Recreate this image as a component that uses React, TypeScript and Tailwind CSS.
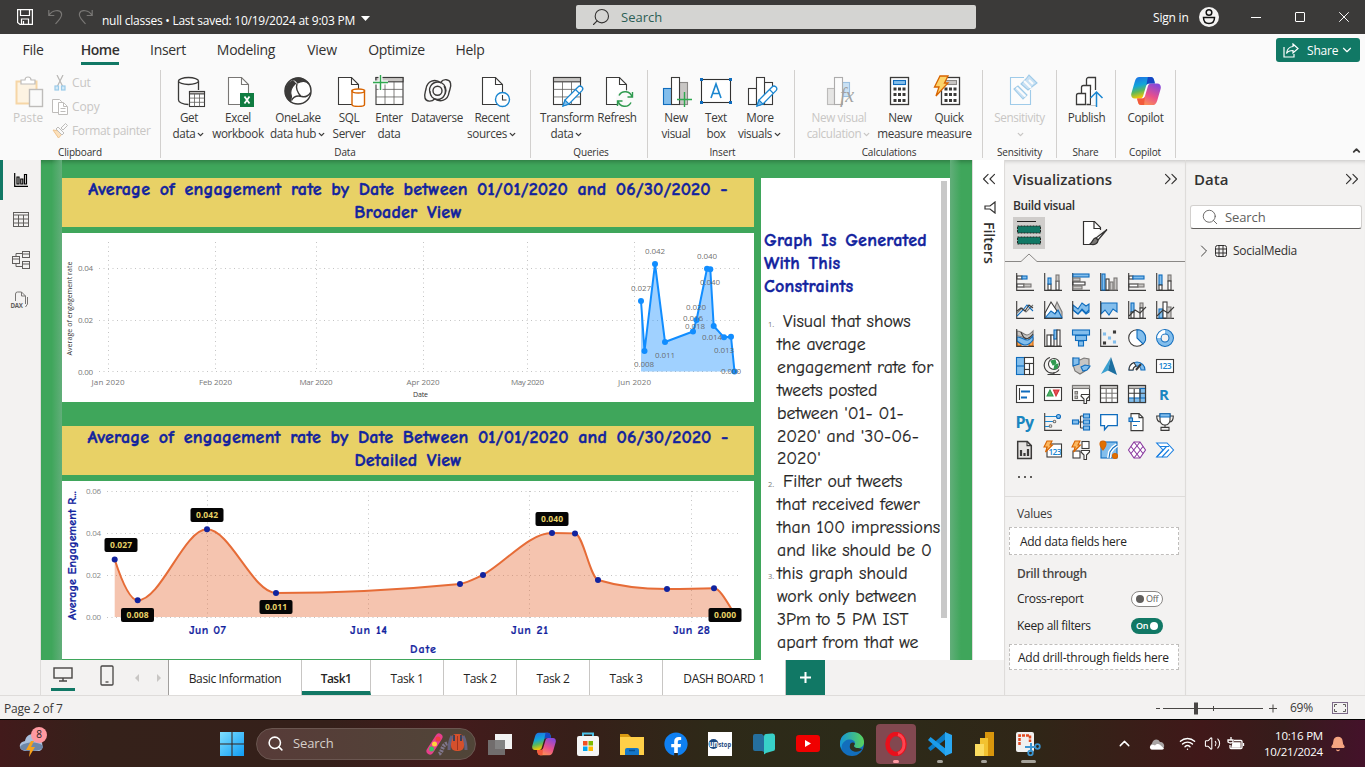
import React from "react";
import {
  ChevronDown, ChevronUp, ChevronsLeft, ChevronsRight, ChevronRight, Search, X, Wifi, Volume2, Bell,
} from "lucide-react";
import { FaFacebook } from "react-icons/fa";

const DK = "#3b3a39";
const BL = "#0f6cbd";
const LB = "#83beec";
const GR = "#c8c6c4";

type Kids = { children?: React.ReactNode };

/* ---------- ribbon drawings, 32 x 34 ---------- */
const R = ({ children, dim }: Kids & { dim?: boolean }) => (
  <svg width="32" height="34" viewBox="0 0 32 34" fill="none" stroke={DK} strokeWidth="1.1" className={dim ? "overflow-visible opacity-40" : "overflow-visible"}>
    {children}
  </svg>
);
const Page = ({ x = 0 }: { x?: number }) => (
  <g>
    <path d={`M${x + 0.5} 2.5h13l7 7v20h-20z`} fill="#fff" />
    <path d={`M${x + 13.5} 2.5v7h7`} />
  </g>
);
const Grid = ({ x, y, w, h, c = 3 }: { x: number; y: number; w: number; h: number; c?: number }) => (
  <g>
    <rect x={x} y={y} width={w} height={h} fill="#fff" />
    <rect x={x} y={y} width={w} height={h * 0.16} fill={GR} />
    {Array.from({ length: c - 1 }, (_, i) => (
      <path key={i} strokeWidth="0.8" stroke="#605e5c" d={`M${x + ((i + 1) * w) / c} ${y + h * 0.16}V${y + h}M${x} ${y + h * 0.16 + ((i + 1) * h * 0.84) / c}H${x + w}`} />
    ))}
  </g>
);
const Pencil = ({ x, y }: { x: number; y: number }) => (
  <g transform={`translate(${x} ${y})`} stroke="#1a86d0">
    <path d="M1 20l2-6L16 1a2.4 2.4 0 0 1 4 3.600L7 18z" fill="#fff" strokeWidth="1.3" />
    <path d="M1 20l2-6 4 4z" fill={LB} />
    <path d="M13.500 3.500l4 4" />
  </g>
);
const Copilot = ({ s }: { s: number }) => (
  <svg width={s} height={s} viewBox="0 0 32 32">
    <defs>
      <linearGradient id="cpa" x1="0" y1="0" x2="0.3" y2="1"><stop offset="0" stopColor="#1f6be8" /><stop offset=".45" stopColor="#12a5d8" /><stop offset=".7" stopColor="#5cb85a" /><stop offset="1" stopColor="#ffc800" /></linearGradient>
      <linearGradient id="cpb" x1=".7" y1="0" x2=".2" y2="1"><stop offset="0" stopColor="#8a48d8" /><stop offset=".5" stopColor="#e8508c" /><stop offset="1" stopColor="#ff9a4c" /></linearGradient>
    </defs>
    <path d="M9 1h12c2.500 0 3 1.500 3.500 3l1 4h-6c-2 0-3 1-3.500 3l-3 10c-.7 2-1.500 3-3.500 3H4c-3 0-4.500-2.500-3.500-6L4 6c1-3.500 2.500-5 5-5z" fill="url(#cpa)" />
    <path d="M18 1h3c2.500 0 3 1.500 3.500 3l1 4h-6c-1.500 0-2.500 .6-3.200 2z" fill="#1746c4" />
    <path d="M23 31H11c-2.500 0-3-1.500-3.500-3l-1-4h5c2 0 3-1 3.500-3l3-10c.7-2 1.500-3 3.500-3H28c3 0 4.500 2.500 3.500 6L28 26c-1 3.500-2.500 5-5 5z" fill="url(#cpb)" />
    <path d="M14 31h-3c-2.500 0-3-1.500-3.500-3l-1-4h5c1.500 0 2.500-.6 3.200-2z" fill="#f25a3c" />
  </svg>
);
const Calc = ({ x, blue }: { x: number; blue?: boolean }) => (
  <g>
    <rect x={x} y="2.500" width="18" height="27" fill="#fff" strokeWidth="1.300" />
    <rect x={x + 3} y="5.500" width="12" height="4" fill={blue ? LB : GR} stroke={blue ? BL : "#8a8886"} />
    {[12.5, 18, 24].map((y) => [3, 7.5, 12].map((d) => <rect key={y + d} x={x + d} y={y} width="3" height="3" fill={DK} stroke="none" />))}
  </g>
);

const icons: Record<string, React.ReactNode> = {
  get: <R><path d="M5.500 6v19c0 2 4 4.500 10 4.500M25.500 6v9" fill="none" strokeWidth="1.300" /><ellipse cx="15.500" cy="6" rx="10" ry="3.500" fill="#fff" strokeWidth="1.300" /><Grid x={16.5} y={16.5} w={15} h={15} /></R>,
  excel: <R><g stroke="#797775"><Page x={6} /></g><rect x="18" y="18" width="14" height="14" fill="#107c41" stroke="none" /><path d="M22.500 21.500l5 7M27.500 21.500l-5 7" stroke="#fff" strokeWidth="1.800" /></R>,
  lake: <R><circle cx="16" cy="16" r="13" strokeWidth="1.500" fill="#fff" /><path d="M11.500 4.500C14 2.200 20 2.200 22.500 5.500C19.500 5.500 17.500 6.200 15.500 7.800C14.500 6 13 5 11.500 4.500z" fill={DK} /><path d="M11 5.500L13.500 8.500C9 12.500 8 17.500 9.500 21.500L8.500 26.500C1.500 21 1 10 11 5.500z" fill={DK} /><path d="M15 8.500c-1.500 5 1 10 4.500 13.500M9.500 25.500C12 20.500 16.500 20.500 20 21.500s7-1 8.500-4M15.500 8c4-2.500 9-2.500 11.500 1" strokeWidth="1.400" /></R>,
  sql: <R><Page x={5} /><path d="M19 15.500v14c0 2.500 12.500 2.500 12.500 0v-14z" fill="#fff" stroke="#d86400" strokeWidth="1.400" /><ellipse cx="25.300" cy="16" rx="6.200" ry="2" fill="#fff" stroke="#d86400" strokeWidth="1.400" /></R>,
  enter: <R><Grid x={3} y={2.5} w={27} h={27} /><path d="M0 7.500h15M7.500 0v15" stroke="#fafafa" strokeWidth="4" /><path d="M0 7.500h15M7.500 0v15" stroke="#2fa84f" strokeWidth="1.400" /></R>,
  dataverse: <R><path d="M20 8C14 3 6 6 5 14c-1 4-2 6-1 9 1 4 7 4 9.500 1" strokeWidth="1.400" /><path d="M13 23.500c6 4.500 14 2 15-6 1-4 2.500-6 1.500-9.500-1-4-7-4.500-9.500-1" strokeWidth="1.400" /><path d="M10 20C6 13 11 7 17 7c5 0 8 4 8 8.500 0 3-1.500 5-3 6.500M23 11c3.500 7-.500 13.500-6.500 13.500C12 24.500 9 21 9 16" strokeWidth="1.300" /><circle cx="16.500" cy="15.700" r="4.500" strokeWidth="1.400" /></R>,
  recent: <R><Page x={6} /><circle cx="26.500" cy="24.500" r="7" fill="#fff" stroke="#1a86d0" strokeWidth="1.400" /><path d="M26.500 20v5h4" /></R>,
  transform: <R><Grid x={2.5} y={2.500} w={27} h={27} /><g transform="translate(10 11)"><Pencil x={1} y={0} /></g></R>,
  refresh: <R><Page x={5} /><circle cx="24" cy="24" r="9" fill="#fafafa" stroke="none" /><path d="M31 22a7 7 0 0 0-13-1.500M17 26a7 7 0 0 0 13 1.500" stroke="#2f9a4f" strokeWidth="1.500" /><path d="M31.500 17v5h-5M16.500 31v-5h5" stroke="#2f9a4f" strokeWidth="1.400" /></R>,
  newvis: <R><rect x="3.500" y="13.500" width="8" height="16" fill={LB} stroke={BL} /><rect x="19.500" y="7.500" width="8" height="22" fill={GR} stroke="#8a8886" /><rect x="11.500" y="2.500" width="8" height="27" fill="#fff" /><path d="M17 24.500h15M24.500 17v15" stroke="#2fa84f" strokeWidth="1.400" /></R>,
  text: <R><rect x="1.500" y="4.500" width="29" height="23" fill="#fff" stroke="#323130" /><path d="M11 23l5-14 5 14M12.500 18.500h7" stroke="#1a86d0" strokeWidth="1.600" />{[[0, 3], [29, 3], [0, 26], [29, 26]].map(([x, y]) => <rect key={x + "" + y} x={x} y={y} width="3" height="3" fill={BL} stroke="none" />)}</R>,
  more: <R><rect x="4.500" y="13.500" width="8" height="16" fill="#fff" /><rect x="20.500" y="7.500" width="8" height="22" fill="#fff" /><rect x="12.500" y="2.500" width="8" height="27" fill="#fff" /><Pencil x={12} y={11} /></R>,
  nvc: <R dim><rect x="4.500" y="13.500" width="7" height="16" fill={GR} stroke="#605e5c" /><rect x="19.500" y="7.500" width="7" height="14" fill={LB} stroke={BL} /><rect x="11.500" y="2.500" width="8" height="27" fill="#fff" /><text x="17" y="27" className="font-['Liberation_Serif',serif] text-[20px] italic" fill="#201f1e" stroke="none">fx</text></R>,
  calc: <R><Calc x={6.5} blue /></R>,
  quick: <R><Calc x={8.5} /><path d="M7 1h8l-3.500 7H15L3 21l3-9H1.500z" fill="#fcd36a" stroke="#d86400" strokeWidth="1.300" /></R>,
  sens: <R dim><g stroke="#1a86d0"><path d="M20 2.500H6.500v27h20V15" fill="#fff" /><path d="M10 14l4-3 9 9-4 4z" fill={LB} /><path d="M12.500 12.500l9 9" strokeWidth="2" stroke="#fff" /><path d="M17 9l5-5 3-4 8 8-4 3-5 4z" fill={LB} /><path d="M25 5l4 4M20 6l7 7" stroke="#fff" strokeWidth="2" /></g></R>,
  publish: <R><g fill="#fff"><path d="M15.500 12V4.500a2 2 0 0 1 2-2h7v27h-9" strokeWidth="1.300" /><path d="M10.500 20v-7.500a2 2 0 0 1 2-2h7v19" strokeWidth="1.300" /><path d="M5.500 29.500v-9a2 2 0 0 1 2-2h7v11z" strokeWidth="1.300" /></g><path d="M20 15h10v15H20z" fill="#fafafa" stroke="none" /><path d="M25.500 32V17.500M19.500 23l6-6 6 6" stroke="#1a86d0" strokeWidth="1.500" /></R>,
  copilot: <div className="flex h-[34px] items-center pb-[2px]"><Copilot s={30} /></div>,
};

type B = { i: string; a: string; b?: string; w: string; dd?: boolean; dim?: boolean };
const groups: { name: string; cls: string; items: B[] }[] = [
  { name: "Data", cls: "w-[370px] pl-[5px]", items: [
    { i: "get", a: "Get", b: "data", w: "w-[46px]", dd: true },
    { i: "excel", a: "Excel", b: "workbook", w: "w-[52px]" },
    { i: "lake", a: "OneLake", b: "data hub", w: "w-[68px]", dd: true },
    { i: "sql", a: "SQL", b: "Server", w: "w-[34px]" },
    { i: "enter", a: "Enter", b: "data", w: "w-[46px]" },
    { i: "dataverse", a: "Dataverse", w: "w-[50px]" },
    { i: "recent", a: "Recent", b: "sources", w: "w-[60px]", dd: true },
  ] },
  { name: "Queries", cls: "w-[117px] pl-[10px]", items: [
    { i: "transform", a: "Transform", b: "data", w: "w-[52px]", dd: true },
    { i: "refresh", a: "Refresh", w: "w-[48px]" },
  ] },
  { name: "Insert", cls: "w-[147px] pl-[9px]", items: [
    { i: "newvis", a: "New", b: "visual", w: "w-[38px]" },
    { i: "text", a: "Text", b: "box", w: "w-[42px]" },
    { i: "more", a: "More", b: "visuals", w: "w-[46px]", dd: true },
  ] },
  { name: "Calculations", cls: "w-[188px] pl-[7px]", items: [
    { i: "nvc", a: "New visual", b: "calculation", w: "w-[74px]", dd: true, dim: true },
    { i: "calc", a: "New", b: "measure", w: "w-[48px]" },
    { i: "quick", a: "Quick", b: "measure", w: "w-[50px]" },
  ] },
  { name: "Sensitivity", cls: "w-[74px] pl-[6px]", items: [{ i: "sens", a: "Sensitivity", b: "", w: "w-[61px]", dd: true, dim: true }] },
  { name: "Share", cls: "w-[59px] pl-[5px]", items: [{ i: "publish", a: "Publish", w: "w-[49px]" }] },
  { name: "Copilot", cls: "w-[60px] pl-[5px]", items: [{ i: "copilot", a: "Copilot", w: "w-[49px]" }] },
];

const RibbonButton = ({ i, a, b, w, dd, dim }: B) => (
  <div className={`flex shrink-0 flex-col items-center text-[11.700px] leading-[16px] tracking-[-0.350px] whitespace-nowrap ${w} ${dim ? "text-[#c8c6c4]" : "text-[#3b3a39]"}`}>
    {icons[i]}
    <span>{a}</span>
    {b !== undefined && <span className="flex h-[16px] items-center">{b}{dd && <ChevronDown size={9} strokeWidth={3.5} className="mt-[2px] ml-[1px]" />}</span>}
  </div>
);

const Ribbon = () => (
  <div className="flex h-[94px] bg-[#fafafa] pt-[4px]">
    <div className="flex h-[88px] w-[161px] shrink-0 flex-col border-r border-[#d2d0ce]">
      <div className="flex h-[76px] shrink-0 pt-[1px]">
        <div className="flex w-[46px] flex-col items-center pt-[4px] pl-[10px] text-[11.800px] leading-[16px] text-[#c8c6c4]">
          <svg width="30" height="34" viewBox="0 0 30 34" fill="none" className="overflow-visible">
            <rect x="3.500" y="6.500" width="20" height="22" stroke="#f6d6a6" strokeWidth="2" fill="#fdf3e2" />
            <path d="M8 9V5h4c0-4 6-4 6 0h4v4z" fill="#fff" stroke="#bebcba" strokeWidth="1.200" />
            <rect x="16.500" y="14.500" width="13" height="17" fill="#fafafa" stroke="#bebcba" strokeWidth="1.400" />
          </svg>
          <span>Paste</span>
        </div>
        <div className="flex flex-col pl-[6px] text-[12px] tracking-[-0.150px] text-[#c8c6c4]">
          <div className="flex h-[24px] items-center gap-[4px]">
            <svg width="16" height="16" viewBox="0 0 16 16" fill="none" stroke="#b9b7b5" strokeWidth="1.200"><path d="M5 0l5.500 11M11 0L5.500 11" /><rect x="3" y="11" width="3.500" height="4" stroke="#9bcbe9" fill="#d5eaf8" /><rect x="9.500" y="11" width="3.500" height="4" stroke="#9bcbe9" fill="#d5eaf8" /></svg>
            Cut
          </div>
          <div className="flex h-[24px] items-center gap-[4px]">
            <svg width="16" height="16" viewBox="0 0 16 16" fill="#fff" stroke="#bebcba"><path d="M.5 13.500V.5h7l2 2v11z" /><path d="M6.500 3.500h5l4 4v8h-9z" /><path d="M8.500 9.500h5M8.500 12.500h5M11.500 4v3.500H15" /></svg>
            Copy
          </div>
          <div className="flex h-[24px] items-center gap-[4px]">
            <svg width="16" height="16" viewBox="0 0 16 16" fill="#fafafa" stroke="#bebcba"><path d="M9 5l4.500-4.500 2 2L11 7z" /><path d="M1 7l6 1 3 3-3.500 4z" fill="#fbe0bb" stroke="#f0c48f" /><path d="M6 4l6 6-2 2-6-6z" /></svg>
            <span className="tracking-[-0.380px] whitespace-nowrap">Format painter</span>
          </div>
        </div>
      </div>
      <div className="text-center text-[10px] leading-[13px] tracking-[-0.150px] text-[#323130]">Clipboard</div>
    </div>
    {groups.map((g) => (
      <div key={g.name} className={`flex h-[88px] shrink-0 flex-col border-r border-[#d2d0ce] ${g.cls}`}>
        <div className="flex h-[76px] shrink-0 pt-[5px]">{g.items.map((b, k) => <RibbonButton key={k} {...b} />)}</div>
        <div className="pr-[6px] text-center text-[10px] leading-[13px] tracking-[-0.150px] text-[#323130]">{g.name}</div>
      </div>
    ))}
    <div className="flex flex-1 items-end justify-end pr-[3px] pb-[4px]"><ChevronUp size={11} strokeWidth={4} color={DK} /></div>
  </div>
);

/* ---------- charts ---------- */
const tick = "font-['Open_Sans',sans-serif] text-[8px]";
const P1: [number, number][] = [[641, 301], [644.5, 351], [655, 264], [665, 342], [693, 331.5], [696.5, 320], [707, 268.7], [710.3, 269.3], [713.7, 326], [724, 337.3], [731, 336.7], [734.5, 371.5]];
const L1: [string, number, number][] = [["0.042", 655, 251], ["0.040", 707, 256], ["0.027", 641, 288], ["0.040", 710, 282], ["0.020", 696, 307], ["0.016", 693, 318], ["0.018", 695, 326], ["0.014", 712, 337], ["0.013", 724, 350], ["0.011", 665, 355], ["0.008", 644, 364], ["0.000", 731, 371]];
const Chart1 = () => {
  const line = P1.map((p) => p.join(",")).join(" L");
  return (
    <svg width="692" height="169" viewBox="62 233 692 169" className="block bg-white">
      <g stroke="#c4c4c4" strokeDasharray="1 3.500">
        {[268.5, 320.5, 371.5].map((y) => <path key={y} d={`M99 ${y}H741`} />)}
        {[108.5, 215.5, 316.5, 423.5, 527.5, 634.5].map((x) => <path key={x} d={`M${x} 242V372`} />)}
      </g>
      <g className={tick} fill="#777">
        {[["0.04", 271], ["0.02", 323], ["0.00", 375]].map(([t, y]) => <text key={t} x="93" y={y} textAnchor="end" textLength="15">{t}</text>)}
        {([["Jan 2020", 108], ["Feb 2020", 215.500], ["Mar 2020", 316], ["Apr 2020", 423], ["May 2020", 527.500], ["Jun 2020", 634.500]] as [string, number][]).map(([t, x]) => <text key={t} x={x} y="385" textAnchor="middle" textLength="33">{t}</text>)}
      </g>
      <path d={`M641,371.500 L${line} Z`} fill="#118dff" fillOpacity=".4" />
      <path d={`M${line}`} fill="none" stroke="#118dff" strokeWidth="2" strokeLinejoin="round" />
      {P1.map(([x, y]) => <circle key={x} cx={x} cy={y} r="3" fill="#118dff" />)}
      <g className={tick} fill="#605e5c" fillOpacity=".9">{L1.map(([t, x, y]) => <text key={t + y} x={x} y={y + 3} textAnchor="middle" textLength="20">{t}</text>)}</g>
      <g className="font-['Open_Sans',sans-serif] text-[7px]" fill="#333">
        <text x="420.500" y="397" textAnchor="middle" textLength="15">Date</text>
        <text transform="translate(72 308.500) rotate(-90)" textAnchor="middle" textLength="94">Average of engagement rate</text>
      </g>
    </svg>
  );
};
const P2: [number, number][] = [[114.7, 559.5], [137.7, 600.3], [207, 529.3], [276, 593], [460, 584], [483, 575], [552, 533], [575, 533.5], [598, 580], [667, 589], [714, 588.3]];
const C2 = "M114.700,559.500C122,582 130,600.300 137.700,600.300C161,600.300 184,529.300 207,529.300C230,529.300 253,593 276,593C337,593 399,590 460,584C468,582.500 475,578.500 483,575C506,562 529,533 552,533C560,533 567,533 575,533.500C583,534 590,577 598,580C621,587 644,589 667,589C683,589 699,588.800 714,588.300C720,588 728,604 736.500,617";
const L2: [string, number, number][] = [["0.027", 121, 545], ["0.008", 137.5, 615], ["0.042", 207, 515], ["0.011", 276, 607], ["0.040", 552, 519], ["0.000", 725, 615]];
const comic = "font-['Comic_Sans_MS','Comic_Neue','Lato',sans-serif]";
const Chart2 = () => (
  <svg width="692" height="178" viewBox="62 481 692 178" className="block bg-white">
    <g stroke="#c4c4c4" strokeDasharray="1 3.500">
      {[491.5, 533.5, 575.5, 617.5].map((y) => <path key={y} d={`M107 ${y}H741`} />)}
      {[207.5, 368.5, 529.5, 691.5].map((x) => <path key={x} d={`M${x} 491V622`} />)}
    </g>
    <path d={`${C2}L114.700,617Z`} fill="#e66c37" fillOpacity=".4" />
    <path d={C2} fill="none" stroke="#e66c37" strokeWidth="2" />
    {P2.map(([x, y]) => <circle key={x} cx={x} cy={y} r="3" fill="#12239e" />)}
    <g className={tick} fill="#888">
      {[["0.06", 494], ["0.04", 536], ["0.02", 578], ["0.00", 620]].map(([t, y]) => <text key={t} x="101" y={y} textAnchor="end" textLength="15">{t}</text>)}
    </g>
    {L2.map(([t, x, y]) => (
      <g key={t}>
        <rect x={x - 16.5} y={y - 7} width="33" height="14" rx="2" fill="#050505" />
        <text x={x} y={y + 3} textAnchor="middle" textLength="22" fill="#e8d166" className="font-['Open_Sans',sans-serif] text-[8.500px] font-bold">{t}</text>
      </g>
    ))}
    <g className={`${comic} text-[12px] font-bold`} fill="#12239e" stroke="#12239e" strokeWidth=".2">
      {([["Jun 07", 207.500], ["Jun 14", 368.500], ["Jun 21", 529.500], ["Jun 28", 691.500]] as [string, number][]).map(([t, x]) => <text key={t} x={x} y="634" textAnchor="middle" textLength="37">{t}</text>)}
      <text x="423" y="653" textAnchor="middle" textLength="26">Date</text>
      <text transform="translate(75.500 555.500) rotate(-90)" textAnchor="middle" textLength="129">Average Engagement R...</text>
    </g>
  </svg>
);

const Banner = ({ a, b }: { a: string; b: string }) => (
  <div className={`h-[49px] w-[692px] bg-[#e8d166] text-center ${comic} text-[18px] leading-[23px] font-bold tracking-[0.180px] whitespace-nowrap text-[#12239e] [word-spacing:2.900px] [-webkit-text-stroke:0.4px_#12239e]`}>
    <div>{a}</div>
    <div>{b}</div>
  </div>
);

const notes: [string, string[]][] = [
  ["1.", ["\u00a0Visual that shows", "the average", "engagement rate for", "tweets posted", "between '01- 01-", "2020' and '30-06-", "2020'"]],
  ["2.", ["\u00a0Filter out tweets", "that received fewer", "than 100 impressions", "and like should be 0"]],
  ["3.", ["this graph should", "work only between", "3Pm to 5 PM IST", "apart from that we"]],
];

const Canvas = () => (
  <div className="flex h-[500px] w-[931px] overflow-hidden bg-[#3fa65b] shadow-[inset_0_5px_4px_-3px_rgba(0,0,0,0.25)]">
    <div className="w-[21px] bg-gradient-to-r from-transparent from-50% to-[#62ae7a]" />
    <div className="w-[692px] pt-[18px]">
      <Banner a="Average of engagement rate by Date between 01/01/2020 and 06/30/2020 -" b="Broader View" />
      <div className="mt-[6px]"><Chart1 /></div>
      <div className="mt-[24px]"><Banner a="Average of engagement rate by Date Between 01/01/2020 and 06/30/2020 -" b="Detailed View" /></div>
      <div className="mt-[6px]"><Chart2 /></div>
    </div>
    <div className="mt-[18px] ml-[7px] flex h-[482px] w-[189px] bg-white">
      <div className={`w-[180px] shrink-0 pt-[52px] ${comic} text-[17.800px] leading-[22.930px] whitespace-nowrap`}>
        <div className="pl-[3px] text-[18px] font-bold tracking-[0.220px] text-[#12239e] [-webkit-text-stroke:0.4px_#12239e] [word-spacing:2px]">
          <div>Graph Is Generated</div><div>With This</div><div>Constraints</div>
        </div>
        <div className="mt-[11px] text-[#252423]">
          {notes.map(([n, lines]) => (
            <div key={n} className="flex">
              <span className="w-[16px] shrink-0 pt-[3px] pl-[7px] font-['Open_Sans',sans-serif] text-[7.500px] text-[#777]">{n}</span>
              <div className="tracking-[-0.020px] [-webkit-text-stroke:0.2px_#252423]">{lines.map((l) => <div key={l}>{l}</div>)}</div>
            </div>
          ))}
        </div>
      </div>
      <div className="mt-[3px] h-[437px] w-[6px] bg-[#c8c8c8]" />
    </div>
    <div className="w-[22px] bg-gradient-to-l from-transparent from-50% to-[#62ae7a]" />
  </div>
);

/* ---------- visual gallery, 18 x 18 ---------- */
const ax = <path d="M.7 0v17.400H18" />;
const r = (x: number, y: number, w: number, h: number, k: "b" | "g" | "w" | "k" | "l") => {
  const m = { b: [LB, BL], g: [GR, "#797775"], w: ["#fff", DK], k: [DK, DK], l: [LB, LB] }[k];
  return <rect key={`${x}-${y}-${w}-${h}`} x={x} y={y} width={w} height={h} fill={m[0]} stroke={m[1]} />;
};
const num = (x: number, y: number) => <text x={x} y={y} textLength="13" fill="#1a86d0" stroke="none" className="font-['Open_Sans',sans-serif] text-[8.500px] font-semibold">123</text>;
const bolt = <path d="M3 0h5L6 4h2.500L1.500 11l1.700-5H0z" fill="#fcb860" stroke="#d86400" />;
const funnel = <path d="M9.500 9.500h8v1.500l-3 3v4.500h-2.500V14l-3-3z" fill="#fff" stroke={DK} />;
const gallery: React.ReactNode[] = [
  <>{ax}{r(1, 3, 5, 3, "w")}{r(6, 3, 5, 3, "b")}{r(1, 11, 7, 3, "w")}{r(8, 11, 7, 3, "g")}</>,
  <>{ax}{r(4, 11, 3, 6, "w")}{r(4, 5, 3, 6, "b")}{r(12, 8, 3, 9, "w")}{r(12, 2, 3, 6, "g")}</>,
  <>{ax}{r(1, 1, 16, 3, "b")}{r(1, 5, 7, 3, "g")}{r(1, 9, 12, 3, "w")}{r(1, 13, 9, 3, "g")}</>,
  <>{ax}{r(2, 1, 3, 16, "b")}{r(6, 6, 3, 11, "w")}{r(10, 9, 3, 8, "g")}{r(14, 5, 3, 12, "g")}</>,
  <>{ax}{r(1, 3, 4, 3, "w")}{r(5, 3, 11, 3, "b")}{r(1, 11, 9, 3, "w")}{r(10, 11, 6, 3, "g")}</>,
  <>{ax}{r(3, 2, 3, 10, "b")}{r(3, 12, 3, 5, "w")}{r(12, 2, 3, 6, "g")}{r(12, 8, 3, 9, "w")}</>,
  <>{ax}<path d="M1 12l5-5 4 4 7-7" stroke="#797775" /><path d="M1 15l6-6 4-5 6 6" stroke={BL} /><path d="M1 10l4-3 4 3 4-6 4 3" /></>,
  <><path d="M8 13l5-12 5 10v6H8z" fill={GR} stroke="#797775" /><path d="M1 12l6-11 6 9-6 7H1z" fill="#fff" /><path d="M1 17l6-7 4 3 3-4 4 8z" fill={LB} stroke={BL} />{ax}</>,
  <><path d="M1 4l5 4 4-6 4 3 3-2v8l-3 2-4-4-4 4-5-4z" fill={LB} stroke={BL} /><path d="M1 9l5 4 4-5 4 4 3-3" stroke={BL} />{ax}</>,
  <><path d="M1 2h16v9l-4-3-4 6-4-5-4 4z" fill={LB} stroke={BL} />{ax}</>,
  <>{ax}{r(3, 2, 3, 9, "b")}{r(3, 11, 3, 6, "w")}{r(12, 2, 3, 5, "g")}{r(12, 7, 3, 10, "w")}<path d="M1 15l6-6 5 3 6-6" /></>,
  <>{ax}{r(3, 8, 4, 9, "b")}{r(7, 1, 4, 16, "w")}{r(11, 6, 4, 11, "g")}<path d="M1 15l6-6 5 3 6-6" /></>,
  <><path d="M1 9h4v8H1zM13 9h4v8h-4z" fill="#f7a14f" stroke="#d86400" /><path d="M1 2c7 0 8 9 16 0v4c-7 8-9 0-16 1z" fill={GR} stroke="#797775" /><path d="M1 8c6-1 9 8 16-1v4c-6 8-11 5-16 1z" fill={LB} stroke={BL} /><path d="M5 3c3 8 6 9 12 2" />{ax}</>,
  <>{ax}{r(3, 6, 4, 11, "w")}{r(7, 6, 3, 11, "w")}{r(10, 1, 3, 9, "b")}{r(13, 1, 3, 16, "w")}</>,
  <>{r(.5, 1, 17, 5, "b")}{r(3.5, 6.5, 11, 5, "b")}{r(6.5, 12, 5, 5, "b")}</>,
  <>{ax}{r(3.5, 4, 2, 2, "l")}{r(8.500, 8, 2, 2, "l")}{r(13.500, 2, 2, 2, "k")}{r(3.500, 13, 2, 2, "k")}{r(13.500, 12, 2, 2, "l")}</>,
  <><circle cx="9" cy="9" r="8.300" fill="#fff" /><path d="M9 .7V9l6 6A8.300 8.300 0 0 0 9 .7z" fill={LB} stroke={BL} /></>,
  <><circle cx="9" cy="9" r="6.200" stroke={BL} strokeWidth="5.500" /><circle cx="9" cy="9" r="6.200" stroke={LB} strokeWidth="3.500" /><path d="M2.800 9A6.200 6.200 0 0 1 9 2.800" stroke="#fff" strokeWidth="3.500" /></>,
  <>{r(.5, .5, 8, 17, "b")}{r(8.500, .5, 9, 6, "w")}{r(8.500, 6.500, 5, 6, "w")}{r(13.500, 6.500, 4, 11, "w")}{r(8.500, 12.500, 5, 5, "w")}<path d="M.5 9h8" stroke={BL} /></>,
  <><circle cx="10" cy="7" r="5.500" fill="#fff" /><path d="M7 4l4-1 1 3-3 2zM11 8l3-1-1 4-3 1z" fill="#2f9a4f" stroke="#2f9a4f" /><path d="M6 .5a8 8 0 1 0 9 12M10 15v2.500M3.500 17.500h13" /></>,
  <><path d="M1 1l7 2 4-2 5 1v9l-4 3-5 3-5-3-2-6z" fill={GR} stroke="#797775" /><path d="M1 1h6v6l-6 2zM9 10l4-2 5 1-3 4-4 1z" fill={LB} stroke={BL} /></>,
  <><path d="M11 0L1 17l7-3.500z" fill="#3aa0d0" stroke="none" /><path d="M11 0l6 18-9-4.500z" fill="#1c6fa0" stroke="none" /></>,
  <><path d="M1 13a8 8 0 0 1 16 0h-4a4 4 0 0 0-8 0z" fill={LB} stroke={BL} /><path d="M1 13a8 8 0 0 1 5-7.400l2 3.600A4 4 0 0 0 5 13z" fill="#fff" /><path d="M8 13l5-6" strokeWidth="2" /></>,
  <>{r(.5, 2.500, 17, 13, "w")}{num(2.5, 12)}</>,
  <>{r(.5, .5, 17, 17, "w")}<path d="M3.500 3v12" /><path d="M5 6.500h9M5 12.500h6" stroke={BL} strokeWidth="2" /></>,
  <>{r(.5, 2.500, 17, 13, "w")}<path d="M6 5l3 6H3z" fill="#57b36a" stroke="#2f9a4f" /><path d="M12 11l3-6H9.500z" fill="#e8505b" stroke="#d13438" /></>,
  <>{r(.5, .5, 17, 15, "w")}{r(.5, .5, 17, 3, "g")}{r(3, 6.500, 2.500, 2.500, "g")}{r(3, 11, 2.500, 2.500, "g")}{funnel}</>,
  <>{r(.5, .5, 17, 17, "w")}{r(.5, .5, 17, 3, "g")}<path d="M.5 8.200h17M.5 13h17M6.200 4v13.500M12 4v13.500" stroke="#797775" /><rect x=".5" y=".5" width="17" height="17" /></>,
  <>{r(.5, .5, 17, 17, "w")}{r(.5, .5, 17, 3, "g")}{r(12, 3.500, 5.500, 14, "b")}{r(.5, 13, 17, 4.500, "b")}<path d="M.5 8.200h17M6.200 4v13.500M12 4v13.500" /><rect x=".5" y=".5" width="17" height="17" /></>,
  <text x="3" y="14.500" fill="#1a86c0" stroke="none" className="font-['Open_Sans',sans-serif] text-[15px] font-bold">R</text>,
  <text x="-.5" y="14.500" fill="#1a86c0" stroke="none" textLength="18.500" className="font-['Open_Sans',sans-serif] text-[16px] font-bold">Py</text>,
  <>{ax}<path d="M1 3.500h12M1 8.500h8M1 13.500h4" stroke="#1a86d0" /><circle cx="14.500" cy="3.500" r="2" fill={LB} stroke={BL} /><circle cx="10.500" cy="8.500" r="1.300" stroke="#797775" /><circle cx="6.500" cy="13" r="1.300" stroke="#797775" /></>,
  <><path d="M6 9h6M8.500 3v12M8.500 3H12M8.500 15H12" />{r(.5, 7, 6, 4, "b")}{r(11.500, 1, 6, 4, "b")}{r(11.500, 7, 6, 4, "b")}{r(11.500, 13, 6, 4, "b")}</>,
  <path d="M.7 1.700h16.600v11H8l-3.500 4v-4H.7z" fill="#fff" stroke={BL} strokeWidth="1.300" />,
  <><path d="M3 .6h8l4 4v13H3z" fill="#fff" /><path d="M11 .6v4h4" /><path d="M5 8.500h7M5 12.500h4" stroke={BL} /><rect x="1" y="5" width="3.500" height="3.500" fill={LB} stroke={BL} /></>,
  <><path d="M4 3H.7c0 4 1 6 4 6M14 3h3.300c0 4-1 6-4 6" /><path d="M4 .7h10V7c0 3-2 5-5 5S4 10 4 7z" fill="#fff" /><path d="M4 .7h10V4H4z" fill={LB} stroke={BL} /><path d="M9 12v2M5 17.400h8v-3H5z" /></>,
  <><path d="M1.700.6h9.600l4 4v13H1.700z" fill="#e6e4e2" strokeWidth="1.500" /><path d="M11 .6v4h4.500" /><path d="M5 9v6M8.500 12v3M12 8v7" strokeWidth="2.200" /></>,
  <>{r(3, 3, 14.5, 13, "w")}{num(4.5, 14)}{bolt}</>,
  <>{r(1, 10, 7, 7, "w")}{r(10, .5, 7, 7, "w")}{funnel}{bolt}</>,
  <>{r(1, 1, 16, 16, "b")}<path d="M9 17l1-6 3-4 4-3" stroke="#fff" strokeWidth="4" /><path d="M9 17l1-6 3-4 4-3" stroke={BL} /><path d="M3 0a3 3 0 0 0-3 3c0 2 3 6 3 6s3-4 3-6a3 3 0 0 0-3-3z" fill="#e07000" stroke="#d86400" /><circle cx="15" cy="15" r="2.500" fill="#e07000" stroke="#d86400" /></>,
  <g stroke="#8b3ba0"><path d="M6 1h6l5.500 8-5.500 8H6L.5 9z" fill="#fff" /><path d="M6 1l9 11.500M12 1L3 12.500M3 5.500L12 17M15 5.500L6 17" /></g>,
  <g stroke="#1a7fe0"><path d="M.7 2H11l6.500 7L11 16H.7L7 9z" fill="#fff" /><path d="M4 5.500h9M3.500 13l7-7.500M.7 16l7-7.500M6 16l7-7.500" fill="none" /></g>,
];

const Visualizations = () => (
  <div className="flex h-[535px] w-[182px] shrink-0 flex-col border-r border-l border-[#dedcda] bg-[#f3f2f1] shadow-[inset_0_4px_4px_-3px_rgba(0,0,0,0.2)]">
    <div className="flex h-[38px] items-center justify-between pr-[3px] pl-[8px] text-[15px] font-semibold tracking-[-0.020px] text-[#323130]">Visualizations<ChevronsRight size={22} strokeWidth={1.200} /></div>
    <div className="flex h-[16px] items-center pl-[8px] text-[12px] font-semibold tracking-[-0.380px] text-[#323130]">Build visual</div>
    <div className="mt-[3px] flex h-[32px] pl-[8px]">
      <div className="flex size-[32px] items-center justify-center bg-[#cfcdcb]">
        <svg width="26" height="26" viewBox="0 0 26 26" fill="#117865"><path d="M1 1.500h19" stroke="#252423" /><rect x="1.500" y="6" width="23" height="7" stroke="#252423" strokeDasharray="2 1" /><rect x="1.500" y="17" width="23" height="7" stroke="#252423" strokeDasharray="2 1" /></svg>
      </div>
      <svg className="mt-[3px] ml-[37px]" width="26" height="26" viewBox="0 0 26 26" fill="none" stroke="#323130" strokeWidth="1.200"><path d="M9 24.500H1.500v-23h11l6 6V10" fill="#fff" /><path d="M12 1.500v7h6.500" /><path d="M25 9.500L16 20l-2-2z" fill="#fff" /><path d="M14 18c-3-.5-3 4-6 6 4 1.500 8 0 8-4z" fill="#797775" /></svg>
    </div>
    <svg width="180" height="14" viewBox="0 0 180 14" fill="none" stroke="#8a8886" className="shrink-0"><path d="M0 12.500h16l8-7.500 8 7.500h148" /></svg>
    <div className="mt-[10px] grid shrink-0 grid-cols-[repeat(6,18px)] gap-[10px] pl-[11px]">
      {gallery.map((g, i) => <svg key={i} width="18" height="18" viewBox="0 0 18 18" fill="none" stroke={DK} strokeWidth="1.100" className="overflow-visible">{g}</svg>)}
    </div>
    <div className="mt-[17px] flex h-[3px] gap-[4px] pl-[13px]">{[0, 1, 2].map((k) => <i key={k} className="size-[2px] bg-[#605e5c]" />)}</div>
    <div className="mt-[17px] border-t border-[#dedcda] pt-[9px]">
      <div className="pl-[12px] text-[12px] leading-[16px] tracking-[-0.300px] text-[#3b3a39]">Values</div>
      <div className="mt-[5px] ml-[4px] flex h-[28px] w-[170px] items-center border border-dashed border-[#c0bebc] bg-white pt-[1px] pl-[10px] text-[12px] tracking-[-0.280px] text-[#252423]">Add data fields here</div>
      <div className="mt-[11px] pl-[12px] text-[12px] leading-[16px] font-semibold tracking-[-0.320px] text-[#484644]">Drill through</div>
      <div className="mt-[6px] flex h-[22px] items-center justify-between pr-[22px] pl-[12px] text-[12px] tracking-[-0.320px] text-[#252423]">Cross-report
        <span className="flex h-[16px] w-[32px] items-center gap-[2px] rounded-full border border-[#8a8886] bg-white pl-[4px] text-[9px] text-[#605e5c]"><i className="size-[8px] rounded-full bg-[#605e5c]" />Off</span>
      </div>
      <div className="mt-[5px] flex h-[22px] items-center justify-between pr-[22px] pl-[12px] text-[12px] tracking-[-0.320px] text-[#252423]">Keep all filters
        <span className="flex h-[16px] w-[32px] items-center gap-[2px] rounded-full bg-[#117865] pl-[5px] text-[9px] font-semibold text-white">On<i className="size-[8px] rounded-full bg-white" /></span>
      </div>
      <div className="mt-[7px] ml-[4px] flex h-[26px] w-[170px] items-center border border-dashed border-[#c0bebc] bg-white pt-[1px] pl-[8px] text-[12px] tracking-[-0.230px] whitespace-nowrap text-[#252423]">Add drill-through fields here</div>
    </div>
  </div>
);

const DataPane = () => (
  <div className="h-[535px] flex-1 bg-[#f3f2f1] shadow-[inset_0_4px_4px_-3px_rgba(0,0,0,0.2)]">
    <div className="flex h-[38px] items-center justify-between pr-[2px] pl-[8px] text-[15px] font-semibold text-[#323130]">Data<ChevronsRight size={22} strokeWidth={1.200} /></div>
    <div className="mt-[7px] ml-[4px] flex h-[24px] w-[172px] items-center gap-[6px] rounded-[3px] border border-[#d2d0ce] border-b-[#605e5c] bg-white pl-[10px] text-[13px] tracking-[-0.100px] text-[#605e5c]"><Search size={18} strokeWidth={1.200} /><span className="mt-[1px]">Search</span></div>
    <div className="mt-[13px] flex h-[18px] items-center pl-[8px] text-[12px] tracking-[-0.270px] text-[#323130]">
      <ChevronRight size={20} strokeWidth={1.100} />
      <svg className="mr-[6px] ml-[1px]" width="12" height="12" viewBox="0 0 12 12" fill="none" stroke="#323130"><rect x=".5" y=".5" width="11" height="11" rx="2" /><path d="M.5 4h11M.5 8h11M4 .5v11M8 .5v11" /></svg>
      SocialMedia
    </div>
  </div>
);

const LeftNav = () => (
  <div className="flex h-[535px] w-[41px] shrink-0 flex-col border-r border-[#dedcda] bg-[#f3f2f1]">
    <div className="flex h-[40px] items-center border-l-[3px] border-[#117865] pl-[11px]"><svg width="14" height="14" viewBox="0 0 14 14" fill="none" stroke="#000" strokeWidth="1.200"><path d="M.7 0v13.300H14" /><path d="M3 11V4h2v7zM6.800 11V6h2v5zM10.500 11V1.500h2V11z" /></svg></div>
    <div className="flex h-[38px] items-center pl-[13px]"><svg width="16" height="15" viewBox="0 0 16 15" fill="none" stroke="#605e5c"><rect x=".5" y=".5" width="15" height="14" /><path d="M.5 3h15M.5 7h15M.5 11h15M5.500 3v12M10.500 3v12" /></svg></div>
    <div className="flex h-[44px] items-center pl-[12px]"><svg width="18" height="18" viewBox="0 0 18 18" fill="none" stroke="#605e5c"><rect x=".5" y="5.500" width="7" height="7" /><path d="M.5 8h7M4 5.500V2.500h6M4 12.500v3h6" /><rect x="10.500" y=".5" width="7" height="6" /><path d="M10.500 3h7" /><rect x="10.500" y="10.500" width="7" height="7" /><path d="M10.500 13h7" /></svg></div>
    <div className="flex h-[36px] items-center pl-[11px]"><svg width="18" height="18" viewBox="0 0 18 18" fill="none" stroke="#797775" className="overflow-visible"><path d="M4.500 10V3a2 2 0 0 1 2-2h4l4 4v8M10.500 1v4h4M16.500 6v7l-2 3" /><text x="-.5" y="17" textLength="12.500" fill="#605e5c" stroke="none" className="font-['Open_Sans',sans-serif] text-[6.200px] font-bold">DAX</text></svg></div>
  </div>
);

const pages: [string, string][] = [["Basic Information", "w-[133px]"], ["Task1", "w-[69px]"], ["Task 1", "w-[73px]"], ["Task 2", "w-[73px]"], ["Task 2", "w-[73px]"], ["Task 3", "w-[73px]"], ["DASH BOARD 1", "w-[123px]"]];
const PageTabs = () => (
  <div className="flex h-[35px] bg-[#f3f2f1]">
    <div className="flex w-[128px] items-start border-r border-[#a19f9d] pl-[10px]">
      <div className="mt-[7px] flex h-[24px] w-[24px] flex-col items-center justify-between border-b-[3px] border-[#117865]"><svg width="20" height="15" viewBox="0 0 20 15" fill="none" stroke="#484644" strokeWidth="1.400"><rect x="1" y="1" width="18" height="10" /><path d="M10 11v3M6 14h8" /></svg></div>
      <svg className="mt-[5px] ml-[25px]" width="14" height="21" viewBox="0 0 14 21" fill="none" stroke="#484644" strokeWidth="1.300"><rect x="1" y="1" width="12" height="19" rx="1" /><path d="M5.500 17h3" /></svg>
      <svg className="mt-[14px] ml-[20px]" width="28" height="8" viewBox="0 0 28 8" fill="#c8c6c4"><path d="M5 0v8L1 4zM23 0v8l4-4z" /></svg>
    </div>
    {pages.map(([t, w], i) => (
      <div key={i} className={`flex items-center justify-center border-r border-[#c8c6c4] bg-white text-[12px] text-[#252423] ${w} ${i === 1 ? "border-b-[4px] border-b-[#117865] pt-[6px] font-semibold tracking-[-0.550px]" : "pt-[2px] tracking-[-0.350px]"}`}>{t}</div>
    ))}
    <div className="flex w-[39px] items-center justify-center bg-[#117865]"><svg width="11" height="11" stroke="#fff" strokeWidth="2"><path d="M5.500 0v11M0 5.500h11" /></svg></div>
  </div>
);

const TitleBar = () => (
  <div className="flex h-[34px] items-center bg-[#3b3a39] text-white">
    <div className="flex w-[576px] items-center pl-[17px]">
      <svg width="16" height="16" viewBox="0 0 16 16" fill="none" stroke="#fff" strokeWidth="1.200"><path d="M.6.600h14.800v14.800H3l-2.400-2z" /><path d="M3.500 1v5.500h9V1M4.500 15v-5h7v5M6.500 12v3" /></svg>
      <svg className="ml-[15px]" width="15" height="16" viewBox="0 0 15 16" fill="none" stroke="#797775" strokeWidth="1.200"><path d="M.8 1v5.500h5.500M1 6.300C4 1 12 0 13.500 4.500c1 4-2.500 6-6 10.500" /></svg>
      <svg className="ml-[15px]" width="15" height="16" viewBox="0 0 15 16" fill="none" stroke="#797775" strokeWidth="1.200"><path d="M14.200 1v5.500H8.700M14 6.300C11 1 3 0 1.500 4.500c-1 4 2.500 6 6 10.500" /></svg>
      <span className="mt-[7px] ml-[9px] w-[254px] text-[12px] font-medium tracking-[-0.240px] whitespace-nowrap">null classes • Last saved: 10/19/2024 at 9:03 PM</span>
      <svg className="mt-[2px] ml-[5px]" width="9" height="5" fill="#fff"><path d="M0 0h9L4.500 5z" /></svg>
    </div>
    <div className="flex h-[24px] w-[400px] items-center rounded-[2px] bg-[#d4d4d2] pl-[15px] text-[13px] text-[#2c5f55]"><Search size={20} strokeWidth={1.300} className="mr-[10px] -scale-x-100 text-[#323130]" /><span className="mt-[1px]">Search</span></div>
    <div className="flex flex-1 items-center pl-[177px] text-[12px] tracking-[-0.200px] whitespace-nowrap">
      <span className="mt-[1px] w-[46px]">Sign in</span>
      <svg width="20" height="20" viewBox="0 0 20 20"><circle cx="10" cy="10" r="10" fill="#f3f2f1" /><circle cx="10" cy="5.500" r="2.800" fill="none" stroke="#111" strokeWidth="1.500" /><path d="M4.500 10.500h11c0 4-2 6-5.500 6s-5.500-2-5.500-6z" fill="none" stroke="#111" strokeWidth="1.500" /></svg>
      <i className="ml-[32px] h-px w-[10px] bg-white" />
      <i className="ml-[34px] size-[10px] rounded-[1px] border border-white" />
      <X size={18} strokeWidth={1.300} className="ml-[30px]" />
    </div>
  </div>
);

const menus: [string, string][] = [["File", "w-[66px]"], ["Home", "w-[68px]"], ["Insert", "w-[68px]"], ["Modeling", "w-[88px]"], ["View", "w-[64px]"], ["Optimize", "w-[85px]"], ["Help", "w-[62px]"]];
const MenuRow = () => (
  <div className="flex h-[32px] items-end bg-[#fafafa] text-[14px] tracking-[-0.300px] text-[#323130]">
    {menus.map(([t, w], i) => (
      <div key={t} className={`flex h-full justify-center ${w}`}><span className={`h-[31px] pt-[6px] leading-[20px] ${i === 1 ? "border-b-[3px] border-[#117865] font-semibold tracking-[-0.500px]" : ""}`}>{t}</span></div>
    ))}
    <div className="mr-[5px] mb-[4px] ml-auto flex h-[24px] w-[84px] items-center rounded-[3px] bg-[#117865] pl-[7px] text-[12px] font-medium tracking-[-0.200px] text-white">
      <svg width="16" height="15" viewBox="0 0 16 15" fill="none" stroke="#fff" strokeWidth="1.200" className="mr-[8px]"><path d="M1 4v10h10v-3" /><path d="M10 1l5 4.500-5 4.500V7.500c-3 0-5 .5-6.500 3C4 6 6.500 3.800 10 3.500z" /></svg>
      <span className="mt-[1px]">Share</span><ChevronDown size={14} strokeWidth={2} className="ml-[2px]" />
    </div>
  </div>
);

const StatusBar = () => (
  <div className="flex h-[24px] items-center border-t border-[#dedcda] bg-[#f3f2f1] pt-[1px] text-[12px] tracking-[-0.250px] text-[#3b3a39]">
    <span className="mt-[1px] w-[1155px] pl-[4px]">Page 2 of 7</span>
    <svg width="124" height="14" viewBox="0 0 124 14" stroke="#484644" fill="none"><path d="M1 7.500h4M118 3.500v8M114 7.500h8M8 7.500h100M58.500 5v5" /><path d="M41 1.500v12" strokeWidth="4" /></svg>
    <span className="ml-[11px] w-[42px]">69%</span>
    <svg width="16" height="12" viewBox="0 0 16 12" fill="none" stroke="#605e5c"><rect x=".5" y=".5" width="15" height="11" stroke="#7d6a88" /><path d="M5 2.500H2.500V5M11 2.500h2.500V5M5 9.500H2.500V7M11 9.500h2.500V7" /></svg>
  </div>
);

const tasks: { n: string; i: React.ReactNode; run?: string; on?: boolean }[] = [
  { n: "view", i: <svg width="24" height="24"><rect x="7" y="2" width="17" height="15" fill="#f2f2f2" /><rect x="0" y="8" width="17" height="15" fill="#777" fillOpacity=".9" /></svg> },
  { n: "copilot", i: <Copilot s={24} /> },
  { n: "store", i: <svg width="24" height="24"><path d="M7 6V1.500h10V6" fill="none" stroke="#4cc2e8" strokeWidth="2" /><rect x="1" y="4" width="22" height="20" rx="2" fill="#f5f5f5" /><path fill="#f25022" d="M7 9h4.500v4.500H7z" /><path fill="#7fba00" d="M12.500 9H17v4.500h-4.500z" /><path fill="#00a4ef" d="M7 14.500h4.500V19H7z" /><path fill="#ffb900" d="M12.500 14.500H17V19h-4.500z" /></svg> },
  { n: "files", i: <svg width="24" height="22"><path d="M0 1h8l3 3v5H0z" fill="#d99a12" /><path d="M0 4h24v18H0z" fill="#ffcf48" /><path d="M5 22v-5q0-2 2-2h10q2 0 2 2v5z" fill="#1477c8" /><path d="M9 17.500h6" stroke="#074e8c" strokeWidth="1.500" /></svg> },
  { n: "facebook", i: <span className="rounded-full bg-[radial-gradient(circle,#fff_55%,transparent_56%)]"><FaFacebook size={24} color="#0f80f2" /></span> },
  { n: "unstop", i: <svg width="24" height="24" className="overflow-visible"><rect width="24" height="24" fill="#fff" /><circle cx="5.500" cy="12" r="5" fill="#1c4980" /><text x="1" y="15" textLength="9" lengthAdjust="spacingAndGlyphs" fill="#fff" className="font-['Open_Sans',sans-serif] text-[8px] font-bold">un</text><text x="10.500" y="15" textLength="12.500" lengthAdjust="spacingAndGlyphs" fill="#1c4980" className="font-['Open_Sans',sans-serif] text-[7.500px] font-bold">stop</text></svg> },
  { n: "book", i: <svg width="22" height="22" viewBox="0 0 22 22"><path d="M0 3q0-2 2-2h7l2 2v16l-2-1H2q-2 0-2-2z" fill="#256f9e" /><path d="M22 3q0-3-3-2.500l-6 .5q-2 0-2 3v17q0 1 2-1l7-2q2 0 2-2z" fill="#38d0c8" /></svg> },
  { n: "youtube", i: <svg width="24" height="18"><rect width="24" height="17" rx="3" fill="#f00000" /><path d="M9 5v7l6-3.500z" fill="#fff" /></svg> },
  { n: "edge", i: <svg width="24" height="24" viewBox="0 0 24 24"><defs><linearGradient id="edg"><stop offset="0" stopColor="#1496d8" /><stop offset="1" stopColor="#5ad35a" /></linearGradient></defs><circle cx="12" cy="12" r="12" fill="#126ebc" /><path d="M0 12C0 3 7 0 12 0c8 0 12 5 12 10 0 4-3 6-6 6-4 0-5-2-3-4 1-4-6-6-10-3-3 2-4 5-3 8-2-2-2-4-2-5z" fill="url(#edg)" /><path d="M15 12c-2 2-1 4 3 4l4 1c-3 5-14 3-12-4 0-2 3-4 5-1z" fill="#2f3020" /></svg> },
  { n: "opera", on: true, run: "w-[6px] bg-[#ff9aa2]", i: <svg width="24" height="24"><ellipse cx="12" cy="12" rx="8.500" ry="10" fill="none" stroke="#e8101c" strokeWidth="4.500" /><path d="M14 2.500c8 2 8 17 0 19" fill="none" stroke="#ff4450" strokeWidth="3" /></svg> },
  { n: "code", run: "w-[6px] bg-[#a5a29a]", i: <svg width="24" height="24"><path d="M18 0L0 16l2.500 3L18 7z" fill="#0a7bc4" /><path d="M18 24L0 8l2.500-3L18 17z" fill="#1b9cea" /><path d="M17 0l7 3v18l-7 3z" fill="#2aa8f2" /></svg> },
  { n: "bi", run: "w-[6px] bg-[#a5a29a]", i: <svg width="19" height="24"><path d="M10 0h9v24h-9z" fill="#d8960c" /><path d="M5 6h8v18H5z" fill="#f2c230" /><path d="M0 12h9v12H0z" fill="#fbdc60" /></svg> },
  { n: "snip", run: "w-[15px] bg-[#a5a29a]", i: <svg width="25" height="24"><rect width="18" height="20" rx="2" fill="#f0f0f0" /><path d="M3.500 13V3.500H14V10" fill="none" stroke="#e04a20" strokeWidth="2.500" strokeDasharray="3 1" /><path d="M9 15h10M15 11v9" stroke="#3b94d0" strokeWidth="2" /><circle cx="21.500" cy="14.500" r="2.300" fill="none" stroke="#3b94d0" strokeWidth="1.800" /><circle cx="14.500" cy="21" r="2.300" fill="none" stroke="#3b94d0" strokeWidth="1.800" /></svg> },
];

const Taskbar = () => (
  <div className="flex h-[48px] items-center border-t border-[#000] bg-[linear-gradient(90deg,#421a1b_0%,#35211a_7%,#35201a_24%,#431b1c_33%,#371f19_42%,#2e2918_52%,#2c2b19_62%,#302617_76%,#401819_88%,#361c1b_94%,#44122a_100%)] text-white">
    <div className="relative ml-[19px] w-[28px]">
      <svg width="28" height="34" viewBox="0 0 28 34"><path d="M6 24c-7-1-7-9 0-10 1-7 9-9 13-5 5 5 7 15 0 15z" fill="#a9bfdc" /><path d="M1 20c0 6 23 5 23 0-1-6-20-6-23 0z" fill="#6f87a8" /><path d="M12 14l-5 9h4l-1 7 6-10h-4l3-6z" fill="#f7a21b" /></svg>
      <span className="absolute top-[0px] left-[12px] flex size-[16px] items-center justify-center rounded-full bg-[#ff99a0] text-[10px] text-[#222]">8</span>
    </div>
    <svg className="ml-[173px]" width="24" height="24"><defs><linearGradient id="win" x2="1" y2="1"><stop offset="0" stopColor="#7fe0ff" /><stop offset="1" stopColor="#0f9cf5" /></linearGradient></defs><path d="M0 0h11.500v11.500H0zM12.500 0H24v11.500H12.500zM0 12.500h11.500V24H0zM12.500 12.500H24V24H12.500z" fill="url(#win)" /></svg>
    <div className="ml-[12px] flex h-[32px] w-[220px] items-center rounded-full border border-[#6a5650] bg-gradient-to-r from-[#573b38] to-[#504538] pl-[10px] text-[13px] tracking-[-0.100px] text-[#d6cfca]">
      <Search size={17} strokeWidth={2.200} className="mr-[9px] text-white" /><span className="mt-[1px]">Search</span>
      <svg className="mr-[7px] ml-auto" width="42" height="24" viewBox="0 0 42 24"><path d="M4 19L13 5" stroke="#e83e8c" strokeWidth="7" strokeLinecap="round" /><circle cx="12" cy="7" r="2.500" fill="#f04040" /><circle cx="8.500" cy="12" r="2.500" fill="#ffd23c" /><circle cx="5.500" cy="17" r="2.500" fill="#3cc060" /><path d="M13 22c4-2 2-9 9-11" stroke="#80778c" strokeWidth="4" strokeDasharray="2 1" fill="none" /><rect x="25" y="2" width="13" height="17" rx="5" fill="#d5502c" /><path d="M28 3v6M35 3v6" stroke="#3b3f58" strokeWidth="2" /><path d="M31.500 4v14" stroke="#a03420" /><path d="M23 18c0-6 1-10 3-14M40 18c0-6-1-10-3-14" stroke="#66617c" strokeWidth="3" fill="none" /></svg>
    </div>
    <div className="ml-[2px] flex h-full">
      {tasks.map((t) => (
        <div key={t.n} className="flex w-[44px] items-center justify-center">
          <div className={`flex h-[40px] w-[40px] flex-col items-center justify-between rounded-[4px] ${t.on ? "bg-[#824850]" : ""}`}>
            <div className="flex h-full items-center">{t.i}</div>
            <i className={`-mt-[4px] mb-[1px] h-[3px] shrink-0 rounded-full ${t.run ?? "w-0"}`} />
          </div>
        </div>
      ))}
    </div>
    <div className="ml-auto flex items-center">
      <ChevronUp size={17} strokeWidth={2} />
      <svg className="ml-[15px]" width="17" height="12"><path d="M4 11.500a3.500 3.500 0 0 1 0-6C5 1 10 0 12 4c4-.5 6 5 2 7.500z" fill="#a8a4a4" /><path d="M3 11.500c-3-3 1-6 4-4 3-3 5-1 9 3l-1 1z" fill="#fff" /></svg>
      <Wifi size={17} strokeWidth={2} className="ml-[14px]" />
      <Volume2 size={17} strokeWidth={1.500} className="ml-[8px]" />
      <svg className="ml-[6px]" width="18" height="14" fill="none" stroke="#fff" strokeWidth="1.300"><path d="M7 3.500h7q1 0 1 1v6q0 1-1 1H4q-1 0-1-1V8" /><path d="M6 6h7v4H5z" fill="#fff" /><path d="M16.500 6v3M4 0v3M1 3h5v2q-2.500 2-5 0z" /></svg>
      <div className="ml-[15px] w-[63px] text-right text-[11.500px] leading-[16px] tracking-[-0.200px] whitespace-nowrap">10:16 PM<br />10/21/2024</div>
      <Bell size={16} fill="#f5a582" stroke="#f5a582" className="mr-[19px] ml-[7px]" />
    </div>
  </div>
);

export default function App() {
  return (
    <div className="flex h-[767px] w-[1365px] flex-col overflow-hidden bg-[#f3f2f1] font-['Open_Sans',sans-serif]">
      <TitleBar />
      <MenuRow />
      <Ribbon />
      <div className="flex h-[535px]">
        <LeftNav />
        <div className="w-[963px] shrink-0">
          <div className="flex h-[500px]">
            <Canvas />
            <div className="flex w-[32px] flex-col items-center border-l border-[#dedcda] bg-white pt-[8px] text-[#323130]">
              <ChevronsLeft size={22} strokeWidth={1.200} />
              <svg className="mt-[11px] ml-[3px]" width="12" height="13" viewBox="0 0 12 13" fill="none" stroke="#323130" strokeWidth="1.200"><path d="M11 1v11L6 8H1V5h5z" /></svg>
              <span className="mt-[8px] text-[14px] leading-[16px] font-semibold [writing-mode:vertical-rl]">Filters</span>
            </div>
          </div>
          <PageTabs />
        </div>
        <Visualizations />
        <DataPane />
      </div>
      <StatusBar />
      <Taskbar />
    </div>
  );
}
